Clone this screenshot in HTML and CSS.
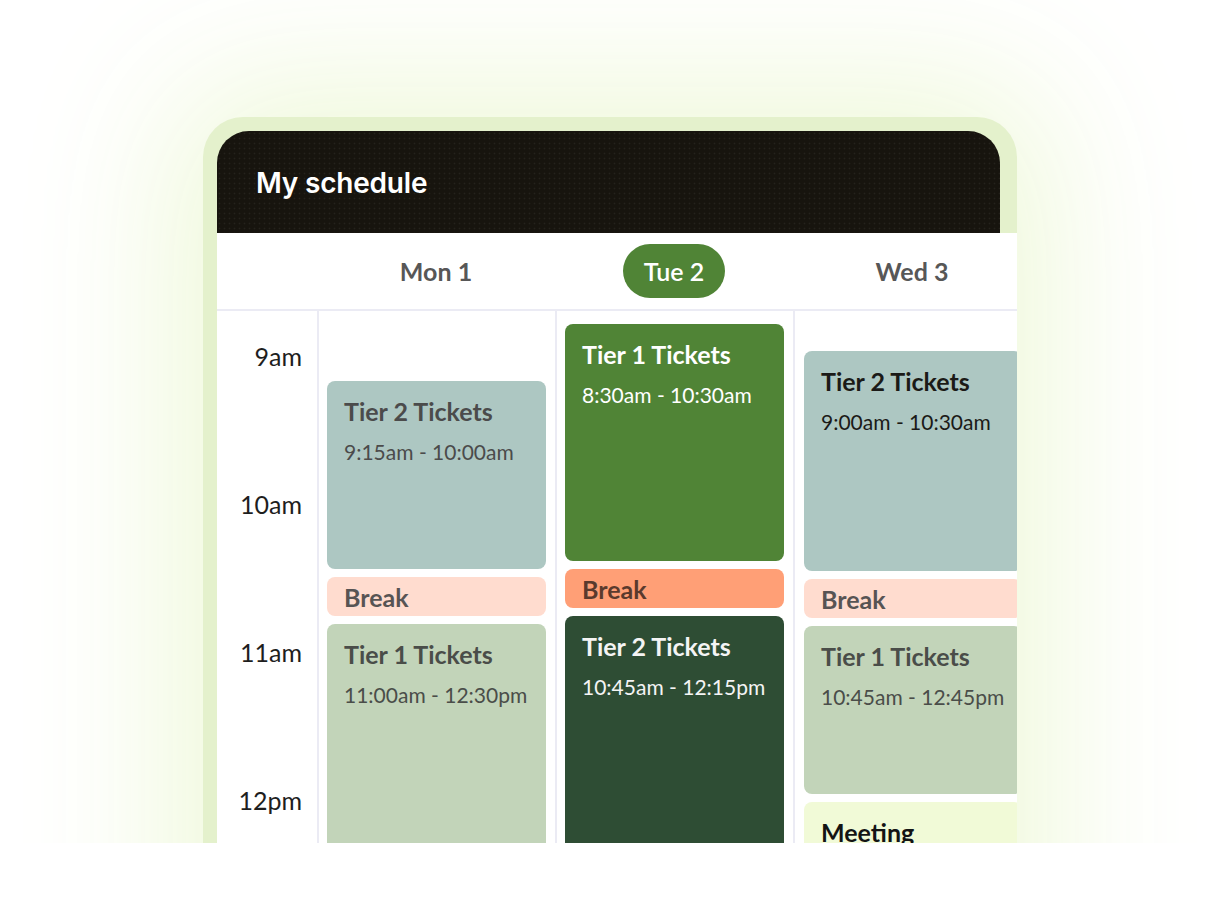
FILE: index.html
```html
<!DOCTYPE html>
<html lang="en">
<head>
<meta charset="utf-8">
<title>My schedule</title>
<link rel="stylesheet" href="styles.css">
</head>
<body>
<div class="stage">
  <div class="frame">
    <div class="header">
      <h1 class="title">My schedule</h1>
    </div>
    <div class="panel">
      <div class="days">
        <div class="day-spacer"></div>
        <div class="day-label"><span>Mon 1</span></div>
        <div class="day-label"><span class="pill">Tue 2</span></div>
        <div class="day-label"><span>Wed 3</span></div>
      </div>
      <div class="grid">
        <div class="times">
          <div class="time">9am</div>
          <div class="time">10am</div>
          <div class="time">11am</div>
          <div class="time">12pm</div>
        </div>
        <div class="col col-mon">
          <div class="ev ev-t2 h-188">
            <div class="ev-title">Tier 2 Tickets</div>
            <div class="ev-time">9:15am - 10:00am</div>
          </div>
          <div class="ev ev-break">
            <div class="ev-title">Break</div>
          </div>
          <div class="ev ev-t1 h-300">
            <div class="ev-title">Tier 1 Tickets</div>
            <div class="ev-time">11:00am - 12:30pm</div>
          </div>
        </div>
        <div class="col col-tue">
          <div class="ev ev-green h-237">
            <div class="ev-title">Tier 1 Tickets</div>
            <div class="ev-time">8:30am - 10:30am</div>
          </div>
          <div class="ev ev-break ev-break-hot">
            <div class="ev-title">Break</div>
          </div>
          <div class="ev ev-forest h-300">
            <div class="ev-title">Tier 2 Tickets</div>
            <div class="ev-time">10:45am - 12:15pm</div>
          </div>
        </div>
        <div class="col col-wed">
          <div class="ev ev-t2 ev-dark h-220">
            <div class="ev-title">Tier 2 Tickets</div>
            <div class="ev-time">9:00am - 10:30am</div>
          </div>
          <div class="ev ev-break">
            <div class="ev-title">Break</div>
          </div>
          <div class="ev ev-t1 h-168">
            <div class="ev-title">Tier 1 Tickets</div>
            <div class="ev-time">10:45am - 12:45pm</div>
          </div>
          <div class="ev ev-meeting h-200">
            <div class="ev-title">Meeting</div>
          </div>
        </div>
      </div>
    </div>
  </div>
</div>
</body>
</html>
```

FILE: styles.css
```css
* { box-sizing: border-box; }

html, body {
  margin: 0;
  padding: 0;
  background: #ffffff;
}

body {
  font-family: "Lato", "Noto Sans", sans-serif;
  overflow: hidden;
}

.stage {
  height: 843px;
  overflow: hidden;
  padding: 117px 0 0 203px;
}

.frame {
  width: 814px;
  height: 900px;
  background: #e4f1cc;
  border-radius: 40px 40px 0 0;
  padding: 14px 0 0 14px;
  box-shadow: 0 0 150px 30px rgba(237, 248, 214, 0.95);
}

.header {
  width: 783px;
  height: 102px;
  background-color: #17140e;
  background-image: radial-gradient(rgba(255, 255, 255, 0.06) 0.7px, transparent 1.1px);
  background-size: 5px 5px;
  border-radius: 32px 32px 0 0;
  padding-left: 39px;
  display: flex;
  align-items: center;
}

.title {
  margin: 0;
  color: #ffffff;
  font-family: "Inter", "Open Sans", sans-serif;
  font-weight: 600;
  font-size: 28px;
  letter-spacing: -0.2px;
  padding-top: 1px;
}

.panel {
  width: 800px;
  height: 760px;
  background: #ffffff;
  overflow: hidden;
}

.days {
  display: grid;
  grid-template-columns: 100px 238px 238px 238px;
  height: 78px;
  border-bottom: 2px solid #ebebf4;
  align-items: center;
}

.day-label {
  display: flex;
  justify-content: center;
  align-items: center;
  font-weight: 700;
  font-size: 25px;
  color: #575757;
}

.pill {
  background: #508436;
  color: #ffffff;
  height: 54px;
  line-height: 54px;
  padding: 0 21px;
  border-radius: 27px;
  font-weight: 600;
}

.grid {
  display: grid;
  grid-template-columns: 100px 238px 238px 238px;
  height: 700px;
}

.times {
  display: flex;
  flex-direction: column;
  align-items: flex-end;
  gap: 118px;
  padding: 30px 15px 0 0;
}

.time {
  font-size: 25px;
  line-height: 30px;
  color: #1e1e1e;
}

.col {
  border-left: 2px solid #ebebf4;
  padding: 0 9px 0 8px;
  display: flex;
  flex-direction: column;
  gap: 8px;
}

.col-mon { padding-top: 70px; }
.col-tue { padding-top: 13px; }
.col-wed { padding-top: 40px; }
.col-wed .ev { margin-left: 1px; }

.ev {
  border-radius: 8px;
  padding: 15px 12px 0 17px;
  flex: none;
  color: #4b4b4b;
}

.ev-title {
  font-weight: 700;
  font-size: 25px;
  line-height: 30px;
  white-space: nowrap;
}

.ev-time {
  font-size: 21px;
  line-height: 26px;
  margin-top: 13px;
  white-space: nowrap;
}

.h-168 { height: 168px; }
.h-188 { height: 188px; }
.h-200 { height: 200px; }
.h-220 { height: 220px; }
.h-237 { height: 237px; }
.h-300 { height: 300px; }

.ev-t2 { background: #adc7c2; }
.ev-t1 { background: #c2d4b9; color: #4a4d49; }
.ev-dark { color: #1b1a17; }

.ev-break {
  height: 39px;
  background: #ffdccf;
  padding-top: 5px;
  color: #575454;
}

.ev-break-hot {
  background: #ff9f76;
  color: #5a3a2d;
}

.ev-green { background: #508436; color: #ffffff; }
.ev-forest { background: #2e4d34; color: #f4f4f4; }
.ev-meeting { background: #f1fad7; color: #141414; }
```
